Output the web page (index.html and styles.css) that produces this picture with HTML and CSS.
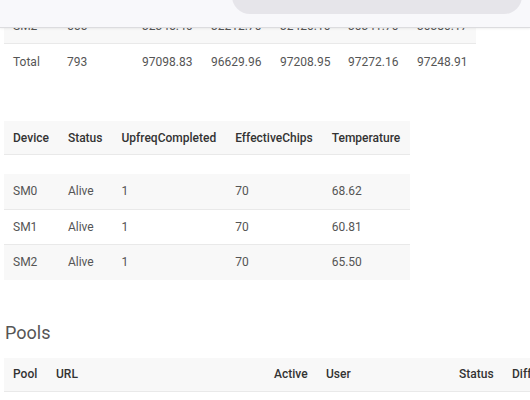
FILE: index.html
```html
<!DOCTYPE html>
<html>
<head>
<meta charset="utf-8">
<link rel="stylesheet" href="styles.css">
</head>
<body>
<header class="topbar">
  <div class="search"></div>
</header>
<main class="content">
  <table class="grid summary">
    <colgroup>
      <col class="c1"><col class="c2"><col class="c3"><col class="c4"><col class="c5"><col class="c6"><col class="c7">
    </colgroup>
    <tbody>
      <tr class="striped"><td>SM2</td><td>555</td><td>32345.46</td><td>32212.70</td><td>32420.10</td><td>30341.70</td><td>30380.17</td></tr>
      <tr class="total"><td>Total</td><td>793</td><td>97098.83</td><td>96629.96</td><td>97208.95</td><td>97272.16</td><td>97248.91</td></tr>
    </tbody>
  </table>

  <table class="grid devices">
    <thead>
      <tr class="head"><th>Device</th><th>Status</th><th>UpfreqCompleted</th><th>EffectiveChips</th><th>Temperature</th></tr>
    </thead>
    <tbody>
      <tr class="spacer"><td colspan="5"></td></tr>
      <tr class="striped"><td>SM0</td><td>Alive</td><td>1</td><td>70</td><td>68.62</td></tr>
      <tr><td>SM1</td><td>Alive</td><td>1</td><td>70</td><td>60.81</td></tr>
      <tr class="striped last"><td>SM2</td><td>Alive</td><td>1</td><td>70</td><td>65.50</td></tr>
    </tbody>
  </table>

  <h2 class="section-title">Pools</h2>

  <table class="grid pools">
    <colgroup>
      <col class="p1"><col class="p2"><col class="p3"><col class="p4"><col class="p5"><col class="p6">
    </colgroup>
    <thead>
      <tr class="head"><th>Pool</th><th>URL</th><th>Active</th><th>User</th><th>Status</th><th>Diff</th></tr>
    </thead>
  </table>
</main>
</body>
</html>
```

FILE: styles.css
```css
html, body {
  margin: 0;
  padding: 0;
  background: #ffffff;
  overflow: hidden;
}
body {
  font-family: Roboto, "Liberation Sans", sans-serif;
  font-size: 12px;
  color: #555555;
}
.topbar {
  position: fixed;
  top: 0;
  left: 0;
  right: 0;
  height: 27px;
  background: #f8f8fb;
  border-bottom: 1px solid #dcdcdf;
  box-shadow: 0 1px 2px rgba(0, 0, 0, 0.06);
  display: flex;
  justify-content: flex-end;
  padding-right: 8px;
  z-index: 10;
  overflow: hidden;
}
.search {
  width: 290px;
  height: 36px;
  margin-top: -22px;
  border-radius: 18px;
  background: #e6e5ea;
}
.content {
  padding: 8px 4px 0 4px;
}
.grid {
  border-collapse: collapse;
  table-layout: auto;
}
.grid td, .grid th {
  padding: 0 9px;
  height: 35px;
  line-height: 16px;
  text-align: left;
  vertical-align: middle;
  white-space: nowrap;
}
.grid tr {
  border-bottom: 1px solid #e9e9e9;
}
.grid th {
  font-weight: 500;
  color: #333333;
  height: 33px;
}
.head {
  background: #f8f8f8;
}
.striped {
  background: #f8f8f8;
}
.grid tr.total, .grid tr.last, .grid tr.spacer {
  border-bottom: none;
}
.spacer td {
  height: 19px;
  padding: 0;
}
.summary {
  width: 472px;
  table-layout: fixed;
}
.c1 { width: 54px; }
.c2 { width: 75px; }
.c3 { width: 69px; }
.c4 { width: 69px; }
.c5 { width: 68px; }
.c6 { width: 69px; }
.c7 { width: 68px; }
.devices {
  margin-top: 42px;
}
.devices td, .devices th {
  padding: 0 10px 0 9px;
}
.devices td {
  height: 34.5px;
}
.devices .spacer td {
  height: 19px;
  padding: 0;
}
.section-title {
  margin: 41px 0 0 1px;
  font-size: 18px;
  font-weight: 400;
  color: #555555;
  line-height: 24px;
}
.pools {
  margin-top: 13px;
  table-layout: fixed;
  width: 560px;
}
.p1 { width: 43px; }
.p2 { width: 218px; }
.p3 { width: 52px; }
.p4 { width: 133px; }
.p5 { width: 53px; }
.p6 { width: 61px; }
```
